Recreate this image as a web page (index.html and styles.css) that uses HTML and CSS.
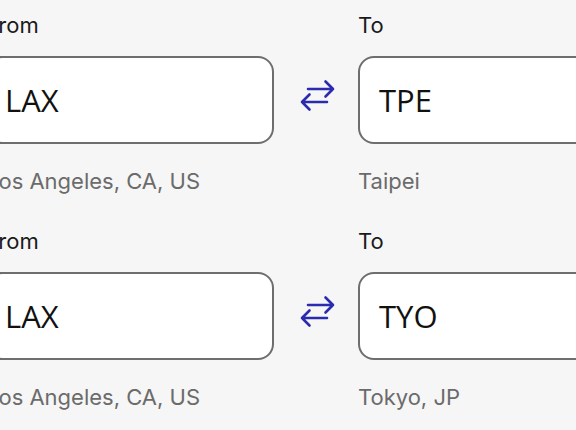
FILE: index.html
```html
<!DOCTYPE html>
<html lang="en">
<head>
    <meta charset="UTF-8">
    <meta name="viewport" content="width=device-width, initial-scale=1.0">
    <title>Flight routes</title>

    <link rel="stylesheet" href="styles.css">
</head>
<body>
    <div class="routes">

        <div class="route">
            <div class="label col-a">From</div>
            <div class="label col-b">To</div>

            <div class="box col-a">LAX</div>
            <div class="swap">
                <svg width="36" height="34" viewBox="0 0 36 34" fill="none" stroke="currentColor" stroke-width="2.6" stroke-linecap="round" stroke-linejoin="round">
                    <path d="M8 10 H33 M25.5 2.5 L33 10 L25.5 17.5"/>
                    <path d="M27 23 H2 M9.5 15.5 L2 23 L9.5 30.5"/>
                </svg>
            </div>
            <div class="box col-b">TPE</div>

            <div class="city col-a">Los Angeles, CA, US</div>
            <div class="city col-b">Taipei</div>
        </div>

        <div class="route">
            <div class="label col-a">From</div>
            <div class="label col-b">To</div>

            <div class="box col-a">LAX</div>
            <div class="swap">
                <svg width="36" height="34" viewBox="0 0 36 34" fill="none" stroke="currentColor" stroke-width="2.6" stroke-linecap="round" stroke-linejoin="round">
                    <path d="M8 10 H33 M25.5 2.5 L33 10 L25.5 17.5"/>
                    <path d="M27 23 H2 M9.5 15.5 L2 23 L9.5 30.5"/>
                </svg>
            </div>
            <div class="box col-b">TYO</div>

            <div class="city col-a">Los Angeles, CA, US</div>
            <div class="city col-b">Tokyo, JP</div>
        </div>

    </div>
</body>
</html>
```

FILE: styles.css
```css
html, body {
    overflow: hidden;
}

body {
    margin: 0;
    background-color: #f6f6f6;
    font-family: Inter, "Liberation Sans", sans-serif;
}

/* the page is cut on the left, so the first column starts off screen */
.routes {
    margin-left: -14px;
    padding-top: 12px;
}

.route {
    display: grid;
    grid-template-columns: 288px 84px 288px;
    margin-bottom: 34px;
}

.col-a {
    grid-column: 1;
}

.col-b {
    grid-column: 3;
}

.label {
    font-size: 22px;
    line-height: 26px;
    color: #1a1a1a;
    margin-bottom: 18px;
}

.box {
    height: 88px;
    box-sizing: border-box;
    display: flex;
    align-items: center;
    padding: 0 19px;
    background-color: #fff;
    border: 2px solid #6e6e6e;
    border-radius: 16px;
    font-family: "Open Sans", "Liberation Sans", sans-serif;
    font-size: 31px;
    color: #111;
}

.box.col-a {
    padding-left: 17px;
}

.swap {
    grid-column: 2;
    justify-self: center;
    align-self: start;
    margin-top: 23px;
    margin-left: 3px;
    color: #2b2bb0;
    line-height: 0;
}

.city {
    margin-top: 24px;
    font-size: 22px;
    line-height: 26px;
    color: #6b6b6b;
}
```
